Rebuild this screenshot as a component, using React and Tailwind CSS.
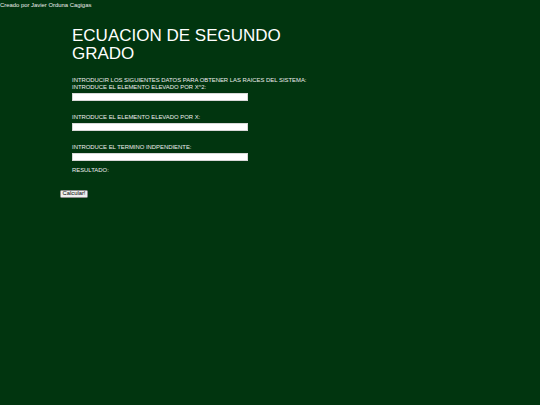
export default function App() {
  return (
    <div
      className="min-h-screen w-full bg-[#01350f] text-white"
      style={{ fontFamily: '"Liberation Sans", Arial, sans-serif' }}
    >
      <div className="pt-[2px] text-[5.9px] leading-[7px] text-[#ededed]">
        Creado por Javier Orduna Cagigas
      </div>

      <div className="ml-[72px] flex flex-col items-start">
        <h1 className="mt-[17.5px] w-[240px] text-[17px] leading-[18.4px] font-normal">
          ECUACION DE SEGUNDO GRADO
        </h1>

        <div className="mt-[13.5px] text-[5.9px] leading-[7px] text-[#ededed]">
          <div>INTRODUCIR LOS SIGUIENTES DATOS PARA OBTENER LAS RAICES DEL SISTEMA:</div>
          <div>INTRODUCE EL ELEMENTO ELEVADO POR X^2:</div>
        </div>
        <Field />

        <div className="mt-[12.5px] text-[5.9px] leading-[7px] text-[#ededed]">
          INTRODUCE EL ELEMENTO ELEVADO POR X:
        </div>
        <Field />

        <div className="mt-[12.5px] text-[5.9px] leading-[7px] text-[#ededed]">
          INTRODUCE EL TERMINO INDPENDIENTE:
        </div>
        <Field />

        <div className="mt-[6px] text-[5.9px] leading-[7px] text-[#ededed]">RESULTADO:</div>
      </div>

      <div className="ml-[60px] mt-[16px]">
        <button className="flex h-[8px] w-[28px] items-center justify-center rounded-[1.5px] border border-[#8a8a8a] bg-[#efefef] text-[5.8px] leading-none text-black">
          Calcular!
        </button>
      </div>
    </div>
  );
}

function Field() {
  return (
    <input
      type="text"
      className="mt-[2px] block h-[8.5px] w-[176px] border border-[#d8d8d8] bg-white outline-none"
    />
  );
}
